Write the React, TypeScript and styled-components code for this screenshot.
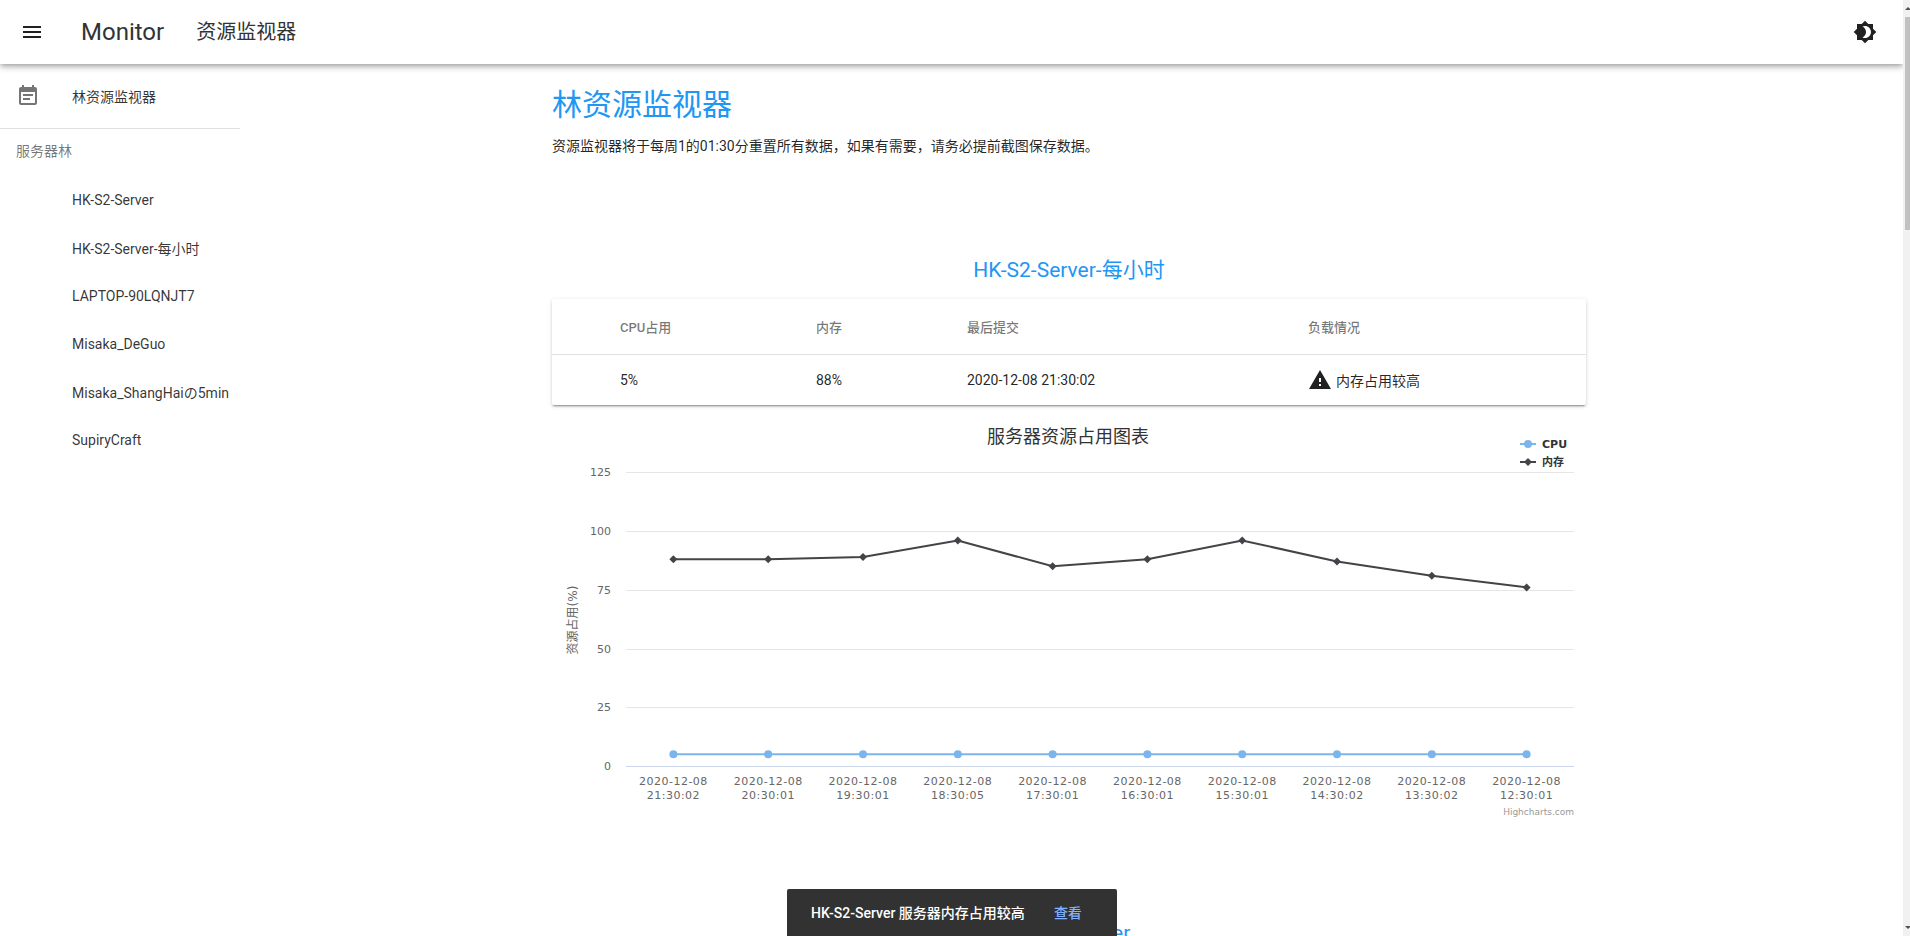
import React from 'react';
import styled, { createGlobalStyle } from 'styled-components';

const uiFont = `Roboto, "Noto Sans CJK SC", sans-serif`;
const chartFont = `"DejaVu Sans", "Noto Sans CJK SC", sans-serif`;

const servers = ['HK-S2-Server', 'HK-S2-Server-每小时', 'LAPTOP-90LQNJT7', 'Misaka_DeGuo', 'Misaka_ShangHaiの5min', 'SupiryCraft'];

const times = [
  '21:30:02', '20:30:01', '19:30:01', '18:30:05', '17:30:01',
  '16:30:01', '15:30:01', '14:30:02', '13:30:02', '12:30:01',
];
const cpu = [5, 5, 5, 5, 5, 5, 5, 5, 5, 5];
const memory = [88, 88, 89, 96, 85, 88, 96, 87, 81, 76];

const GlobalStyle = createGlobalStyle`
  html, body {
    margin: 0;
    height: 100%;
    overflow: hidden;
    background: #fff;
  }
  * {
    box-sizing: border-box;
  }
`;

const Page = styled.div`
  display: flex;
  height: 936px;
  overflow: hidden;
  font-family: ${uiFont};
  color: rgba(0, 0, 0, 0.87);
`;

const Viewport = styled.div`
  flex: 1;
  min-width: 0;
  display: flex;
  flex-direction: column;
  overflow: hidden;
`;

const TopBar = styled.header`
  position: relative;
  z-index: 2;
  flex: none;
  height: 64px;
  display: flex;
  align-items: center;
  padding: 0 26px 0 20px;
  background: #fff;
  box-shadow: 0 2px 4px -1px rgba(0, 0, 0, 0.2), 0 4px 5px 0 rgba(0, 0, 0, 0.14), 0 1px 10px 0 rgba(0, 0, 0, 0.12);
`;

const Icon = styled.svg<{ $color?: string }>`
  flex: none;
  width: 24px;
  height: 24px;
  fill: ${(p) => p.$color || 'rgba(0, 0, 0, 0.87)'};
`;

const Brand = styled.div`
  margin-left: 37px;
  font-size: 24px;
  line-height: 32px;
  color: #333;
`;

const SubBrand = styled.div`
  margin-left: 32px;
  font-size: 20px;
  line-height: 32px;
  color: #333;
`;

const BarSpacer = styled.div`
  flex: 1;
`;

const Body = styled.div`
  flex: 1;
  min-height: 0;
  display: flex;
`;

const Sidebar = styled.nav`
  flex: none;
  width: 240px;
  padding-top: 8px;
`;

const NavItem = styled.div`
  height: 48px;
  display: flex;
  align-items: center;
  padding: 0 16px;
  font-size: 14px;
  color: rgba(0, 0, 0, 0.8);
  white-space: nowrap;
`;

const NavLabel = styled.span<{ $indent?: boolean }>`
  margin-left: ${(p) => (p.$indent ? '56px' : '32px')};
`;

const NavDivider = styled.hr`
  margin: 8px 0 0;
  border: 0;
  border-top: 1px solid #e0e0e0;
`;

const NavHeader = styled.div`
  height: 44px;
  margin-bottom: 3px;
  padding-left: 16px;
  line-height: 44px;
  font-size: 14px;
  color: rgba(0, 0, 0, 0.54);
`;

const Main = styled.main`
  flex: 1;
  min-width: 0;
  padding: 21px 0 0 312px;
  overflow: hidden;
`;

const Title = styled.h1`
  margin: 0;
  font-size: 30px;
  font-weight: 400;
  line-height: 40px;
  color: #2196f3;
`;

const Notice = styled.p`
  margin: 11px 0 99px;
  font-size: 14px;
  line-height: 20px;
  color: rgba(0, 0, 0, 0.87);
`;

const Section = styled.section`
  width: 1034px;
  margin-bottom: 101px;
`;

const SectionTitle = styled.h2`
  margin: 0 0 14px;
  font-size: 21px;
  font-weight: 400;
  line-height: 30px;
  text-align: center;
  color: #2196f3;
`;

const Card = styled.div`
  background: #fff;
  border-radius: 2px;
  box-shadow: 0 3px 1px -2px rgba(0, 0, 0, 0.2), 0 2px 2px 0 rgba(0, 0, 0, 0.14), 0 1px 5px 0 rgba(0, 0, 0, 0.12);
`;

const Row = styled.div<{ $head?: boolean }>`
  display: grid;
  grid-template-columns: 196px 151px 341px 1fr;
  align-items: center;
  height: ${(p) => (p.$head ? '56px' : '50px')};
  padding-left: 68px;
  font-size: ${(p) => (p.$head ? '13px' : '14px')};
  font-weight: ${(p) => (p.$head ? 500 : 400)};
  color: ${(p) => (p.$head ? 'rgba(0, 0, 0, 0.54)' : 'rgba(0, 0, 0, 0.87)')};
  border-bottom: ${(p) => (p.$head ? '1px solid #e0e0e0' : '0')};
`;

const LoadCell = styled.div`
  display: flex;
  align-items: center;
  gap: 4px;
`;

const ChartBox = styled.svg`
  display: block;
  width: 1034px;
  height: 400px;
  margin-top: 12px;
  font-family: ${chartFont};
`;

const Snackbar = styled.div`
  position: fixed;
  z-index: 3;
  left: 787px;
  bottom: -1px;
  width: 330px;
  height: 48px;
  display: flex;
  align-items: center;
  padding: 0 24px 2px;
  background: #323232;
  border-radius: 2px 2px 0 0;
  font-size: 14px;
  font-weight: 500;
  color: #fff;
  white-space: nowrap;
`;

const SnackAction = styled.span`
  margin-left: 29px;
  color: #82b1ff;
`;

const ScrollRail = styled.div`
  flex: none;
  width: 7px;
  display: flex;
  flex-direction: column;
  align-items: flex-end;
  background: #f1f1f1;
`;

const RailArrow = styled.div<{ $down?: boolean }>`
  flex: none;
  width: 5px;
  height: 17px;
  display: flex;
  justify-content: center;
  align-items: center;
  &::before {
    content: '';
    border-left: 3px solid transparent;
    border-right: 3px solid transparent;
    ${(p) => (p.$down ? 'border-top: 3px solid #505050;' : 'border-bottom: 3px solid #505050;')}
  }
`;

const RailThumb = styled.div`
  flex: none;
  width: 5px;
  height: 213px;
  background: #c1c1c1;
`;

const RailGap = styled.div`
  flex: 1;
`;

function MenuIcon() {
  return (
    <Icon viewBox="0 0 24 24">
      <path d="M3 18h18v-2H3v2zm0-5h18v-2H3v2zm0-7v2h18V6H3z" />
    </Icon>
  );
}

function ThemeIcon() {
  return (
    <Icon viewBox="0 0 24 24">
      <path d="M20 8.69V4h-4.69L12 .69 8.69 4H4v4.69L.69 12 4 15.31V20h4.69L12 23.31 15.31 20H20v-4.69L23.31 12 20 8.69zM12 18c-.89 0-1.74-.2-2.5-.55C11.56 16.5 13 14.42 13 12s-1.44-4.5-3.5-5.45C10.26 6.2 11.11 6 12 6c3.31 0 6 2.69 6 6s-2.69 6-6 6z" />
    </Icon>
  );
}

function NoteIcon() {
  return (
    <Icon viewBox="0 0 24 24" $color="rgba(0, 0, 0, 0.54)">
      <path d="M17 10H7v2h10v-2zm2-7h-1V1h-2v2H8V1H6v2H5c-1.11 0-1.99.9-1.99 2L3 19c0 1.1.89 2 2 2h14c1.1 0 2-.9 2-2V5c0-1.1-.9-2-2-2zm0 16H5V8h14v11zm-5-5H7v2h7v-2z" />
    </Icon>
  );
}

function WarnIcon() {
  return (
    <Icon viewBox="0 0 24 24">
      <path d="M1 21h22L12 2 1 21zm12-3h-2v-2h2v2zm0-4h-2v-4h2v4z" />
    </Icon>
  );
}

const plotLeft = 74;
const plotWidth = 948;
const plotBottom = 349;
const unit = 293.7 / 125;

const xAt = (i: number) => plotLeft + (plotWidth / 10) * (i + 0.5);
const yAt = (v: number) => plotBottom - v * unit;
const linePoints = (values: number[]) => values.map((v, i) => `${xAt(i)},${yAt(v)}`).join(' ');
const diamond = (x: number, y: number) => `${x},${y - 4} ${x + 4},${y} ${x},${y + 4} ${x - 4},${y}`;

function UsageChart() {
  return (
    <ChartBox viewBox="0 0 1034 400">
      <text x="516" y="26" textAnchor="middle" fontSize="18" fill="#333">服务器资源占用图表</text>

      {[0, 25, 50, 75, 100, 125].map((tick) => (
        <g key={tick}>
          <line
            x1={plotLeft}
            x2={plotLeft + plotWidth}
            y1={Math.round(yAt(tick)) + 0.5}
            y2={Math.round(yAt(tick)) + 0.5}
            stroke={tick === 0 ? '#ccd6eb' : '#e6e6e6'}
          />
          <text x="59" y={yAt(tick) + 4} textAnchor="end" fontSize="11" fill="#666">{tick}</text>
        </g>
      ))}

      <text transform="translate(25 203) rotate(-90)" textAnchor="middle" fontSize="12" fill="#666">资源占用(%)</text>

      {times.map((time, i) => (
        <text key={i} textAnchor="middle" fontSize="11" fill="#666" letterSpacing="0.5">
          <tspan x={xAt(i)} y="368">2020-12-08</tspan>
          <tspan x={xAt(i)} y="382">{time}</tspan>
        </text>
      ))}

      <polyline points={linePoints(cpu)} fill="none" stroke="#7cb5ec" strokeWidth="2" />
      {cpu.map((v, i) => <circle key={i} cx={xAt(i)} cy={yAt(v)} r="4" fill="#7cb5ec" />)}

      <polyline points={linePoints(memory)} fill="none" stroke="#434348" strokeWidth="2" />
      {memory.map((v, i) => <polygon key={i} points={diamond(xAt(i), yAt(v))} fill="#434348" />)}

      <line x1="968" x2="984" y1="27" y2="27" stroke="#7cb5ec" strokeWidth="2" />
      <circle cx="976" cy="27" r="4" fill="#7cb5ec" />
      <text x="990" y="31" fontSize="11" fontWeight="700" fill="#333">CPU</text>
      <line x1="968" x2="984" y1="45" y2="45" stroke="#434348" strokeWidth="2" />
      <polygon points={diamond(976, 45)} fill="#434348" />
      <text x="990" y="49" fontSize="11" fontWeight="700" fill="#333">内存</text>

      <text x="1022" y="398" textAnchor="end" fontSize="9" fill="#999">Highcharts.com</text>
    </ChartBox>
  );
}

function ServerSection({ name }: { name: string }) {
  return (
    <Section>
      <SectionTitle>{name}</SectionTitle>
      <Card>
        <Row $head>
          <div>CPU占用</div>
          <div>内存</div>
          <div>最后提交</div>
          <div>负载情况</div>
        </Row>
        <Row>
          <div>5%</div>
          <div>88%</div>
          <div>2020-12-08 21:30:02</div>
          <LoadCell>
            <WarnIcon />
            内存占用较高
          </LoadCell>
        </Row>
      </Card>
      <UsageChart />
    </Section>
  );
}

export default function App() {
  return (
    <Page>
      <GlobalStyle />
      <Viewport>
        <TopBar>
          <MenuIcon />
          <Brand>Monitor</Brand>
          <SubBrand>资源监视器</SubBrand>
          <BarSpacer />
          <ThemeIcon />
        </TopBar>
        <Body>
          <Sidebar>
            <NavItem>
              <NoteIcon />
              <NavLabel>林资源监视器</NavLabel>
            </NavItem>
            <NavDivider />
            <NavHeader>服务器林</NavHeader>
            {servers.map((name) => (
              <NavItem key={name}>
                <NavLabel $indent>{name}</NavLabel>
              </NavItem>
            ))}
          </Sidebar>
          <Main>
            <Title>林资源监视器</Title>
            <Notice>资源监视器将于每周1的01:30分重置所有数据，如果有需要，请务必提前截图保存数据。</Notice>
            <ServerSection name="HK-S2-Server-每小时" />
            <ServerSection name="HK-S2-Server" />
          </Main>
        </Body>
      </Viewport>
      <ScrollRail>
        <RailArrow />
        <RailThumb />
        <RailGap />
        <RailArrow $down />
      </ScrollRail>
      <Snackbar>
        HK-S2-Server 服务器内存占用较高
        <SnackAction>查看</SnackAction>
      </Snackbar>
    </Page>
  );
}
